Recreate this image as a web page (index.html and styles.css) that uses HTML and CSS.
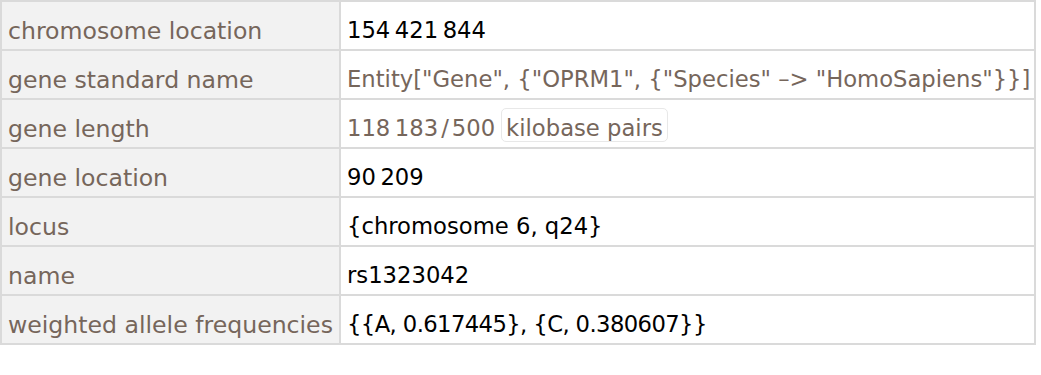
FILE: index.html
```html
<!DOCTYPE html>
<html>
<head>
<meta charset="utf-8">
<link rel="stylesheet" href="styles.css">
</head>
<body>
<div class="grid">
  <div class="label">chromosome location</div>
  <div class="value">154&#8201;421&#8201;844</div>
  <div class="label">gene standard name</div>
  <div class="value brown">Entity["Gene", {"OPRM1", {"Species" –&gt; "HomoSapiens"}}]</div>
  <div class="label">gene length</div>
  <div class="value brown">118&#8201;183<span class="slash">/</span>500<span class="unit">kilobase pairs</span></div>
  <div class="label">gene location</div>
  <div class="value">90&#8201;209</div>
  <div class="label">locus</div>
  <div class="value">{chromosome 6, q24}</div>
  <div class="label">name</div>
  <div class="value">rs1323042</div>
  <div class="label">weighted allele frequencies</div>
  <div class="value tight">{{A, 0.617445}, {C, 0.380607}}</div>
</div>
</body>
</html>
```
FILE: styles.css
```css
body {
  margin: 0;
  background: #fff;
  font-family: "DejaVu Sans", Verdana, sans-serif;
}
.grid {
  display: grid;
  grid-template-columns: 337px 1fr;
  grid-auto-rows: 47px;
  gap: 2px;
  padding: 2px;
  width: 1036px;
  box-sizing: border-box;
  background: #dadada;
}
.label, .value {
  display: flex;
  align-items: flex-end;
  white-space: nowrap;
  line-height: 28px;
}
.label {
  background: #f2f2f2;
  color: #76665b;
  font-size: 23.6px;
  padding: 0 0 4px 6px;
}
.value {
  background: #fff;
  color: #000;
  font-size: 22.7px;
  padding: 0 0 5px 6px;
}
.value.brown {
  color: #76665b;
}
.value.tight {
  letter-spacing: -0.6px;
}
.slash {
  margin: 0 3px;
}
.unit {
  display: inline-block;
  margin-left: 6px;
  padding: 6px 4px 0;
  line-height: 26px;
  border: 1px solid #e8e8e8;
  border-radius: 5px;
}
```
